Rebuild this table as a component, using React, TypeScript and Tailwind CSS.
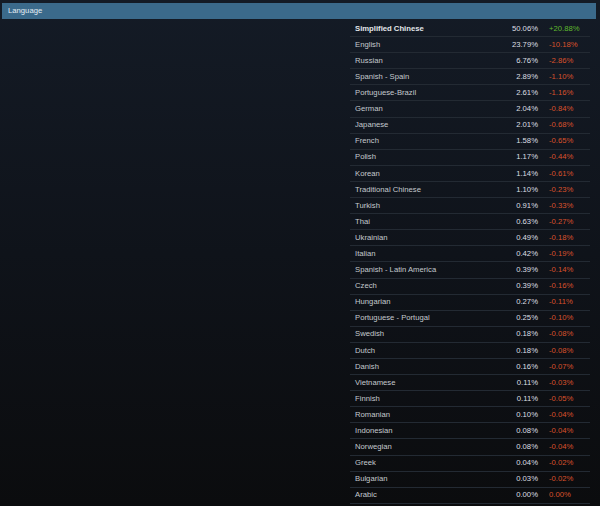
const rows: [string, string, string][] = [
  ['Simplified Chinese', '50.06%', '+20.88%'],
  ['English', '23.79%', '-10.18%'],
  ['Russian', '6.76%', '-2.86%'],
  ['Spanish - Spain', '2.89%', '-1.10%'],
  ['Portuguese-Brazil', '2.61%', '-1.16%'],
  ['German', '2.04%', '-0.84%'],
  ['Japanese', '2.01%', '-0.68%'],
  ['French', '1.58%', '-0.65%'],
  ['Polish', '1.17%', '-0.44%'],
  ['Korean', '1.14%', '-0.61%'],
  ['Traditional Chinese', '1.10%', '-0.23%'],
  ['Turkish', '0.91%', '-0.33%'],
  ['Thai', '0.63%', '-0.27%'],
  ['Ukrainian', '0.49%', '-0.18%'],
  ['Italian', '0.42%', '-0.19%'],
  ['Spanish - Latin America', '0.39%', '-0.14%'],
  ['Czech', '0.39%', '-0.16%'],
  ['Hungarian', '0.27%', '-0.11%'],
  ['Portuguese - Portugal', '0.25%', '-0.10%'],
  ['Swedish', '0.18%', '-0.08%'],
  ['Dutch', '0.18%', '-0.08%'],
  ['Danish', '0.16%', '-0.07%'],
  ['Vietnamese', '0.11%', '-0.03%'],
  ['Finnish', '0.11%', '-0.05%'],
  ['Romanian', '0.10%', '-0.04%'],
  ['Indonesian', '0.08%', '-0.04%'],
  ['Norwegian', '0.08%', '-0.04%'],
  ['Greek', '0.04%', '-0.02%'],
  ['Bulgarian', '0.03%', '-0.02%'],
  ['Arabic', '0.00%', '0.00%'],
];

export default function App() {
  return (
    <div
      className="w-[600px] h-[506px] overflow-hidden bg-gradient-to-b from-[#141b26] via-[#0f131a] to-[#0b0c0e] pt-[3px] pl-[2px] pr-[4px] flex flex-col text-[7.7px] leading-none"
      style={{ fontFamily: '"Liberation Sans", Arial, sans-serif' }}
    >
      {/* header */}
      <div className="h-[16px] shrink-0 bg-[#3b6a8b] flex items-center pl-[6px] text-[#e4edf4]">Language</div>

      <div className="flex flex-1 pt-[2px]">
        <div className="flex-1" />
        <div className="w-[240px] mr-[6px] flex flex-col">
          {rows.map(([name, pct, delta], i) => {
            const first = i === 0;
            return (
              <div key={name} className="h-[16.1px] flex items-center border-b border-[#232a33]">
                <div className={`flex-1 pl-[5px] ${first ? 'font-bold text-[#e2e6ea]' : 'text-[#c4c9ce]'}`}>{name}</div>
                <div className="w-[60px] text-right text-[#dcdfe2]">{pct}</div>
                <div className={`w-[52px] pl-[11px] ${delta.startsWith('+') ? 'text-[#5fb82e]' : 'text-[#d9512c]'}`}>
                  {delta}
                </div>
              </div>
            );
          })}
        </div>
      </div>
    </div>
  );
}
